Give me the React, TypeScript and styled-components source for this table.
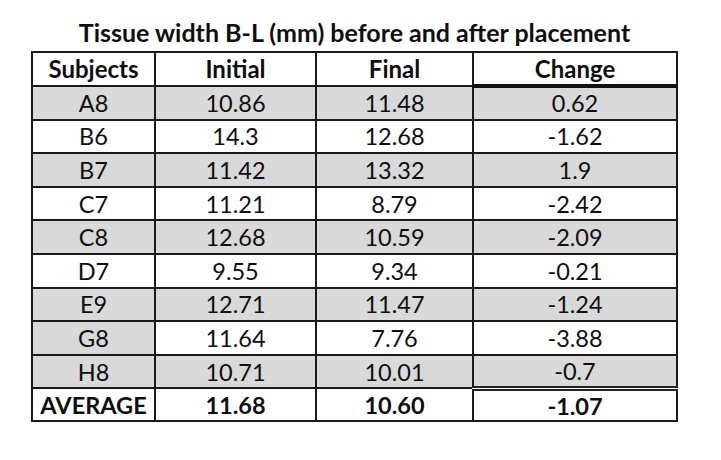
import React from "react";
import styled, { createGlobalStyle } from "styled-components";

const Global = createGlobalStyle`
  html, body { margin: 0; padding: 0; background: #ffffff; }
  body { font-family: Lato, "Open Sans", sans-serif; color: #0e0e0e; }
`;

const Page = styled.div`
  width: 721px;
  height: 460px;
  padding: 17px 0 0 32px;
  box-sizing: border-box;
`;

const Block = styled.div`
  width: 645px;
  display: flex;
  flex-direction: column;
  align-items: center;
`;

const Title = styled.div`
  font-weight: 700;
  font-size: 25px;
  line-height: 30px;
  height: 34px;
  white-space: nowrap;
`;

const Table = styled.table`
  width: 645px;
  border-collapse: collapse;
  table-layout: fixed;
  border: 2px solid #1a1a1a;
`;

const Row = styled.tr<{ $h: number }>`
  height: ${(p) => p.$h}px;
`;

const Cell = styled.td<{ $shade?: boolean; $bold?: boolean; $thickBottom?: boolean; $doubleTop?: boolean }>`
  border: 2px solid #1a1a1a;
  padding: 0;
  text-align: center;
  vertical-align: middle;
  font-size: 23.5px;
  line-height: 28px;
  font-weight: ${(p) => (p.$bold ? 700 : 400)};
  background: ${(p) => (p.$shade ? "#d9d9d9" : "#ffffff")};
  ${(p) => (p.$thickBottom ? "border-bottom: 4px solid #111;" : "")}
  ${(p) => (p.$doubleTop ? "border-top: 5px double #222;" : "")}
`;

const Head = styled(Cell).attrs({ as: "th" })`
  font-size: 24px;
`;

type R = { s: string; i: string; f: string; c: string; shade: [boolean, boolean, boolean, boolean] };

const all = (v: boolean): [boolean, boolean, boolean, boolean] => [v, v, v, v];

const rows: R[] = [
  { s: "A8", i: "10.86", f: "11.48", c: "0.62", shade: all(true) },
  { s: "B6", i: "14.3", f: "12.68", c: "-1.62", shade: all(false) },
  { s: "B7", i: "11.42", f: "13.32", c: "1.9", shade: all(true) },
  { s: "C7", i: "11.21", f: "8.79", c: "-2.42", shade: all(false) },
  { s: "C8", i: "12.68", f: "10.59", c: "-2.09", shade: all(true) },
  { s: "D7", i: "9.55", f: "9.34", c: "-0.21", shade: all(false) },
  { s: "E9", i: "12.71", f: "11.47", c: "-1.24", shade: all(true) },
  { s: "G8", i: "11.64", f: "7.76", c: "-3.88", shade: [true, false, false, false] },
  { s: "H8", i: "10.71", f: "10.01", c: "-0.7", shade: all(true) },
];

export default function App() {
  return (
    <Page>
      <Global />
      <Block>
        <Title>Tissue width B-L (mm) before and after placement</Title>
        <Table>
          <colgroup>
            <col style={{ width: 123 }} />
            <col style={{ width: 161 }} />
            <col style={{ width: 157 }} />
            <col style={{ width: 204 }} />
          </colgroup>
          <thead>
            <Row $h={34}>
              <Head $bold>Subjects</Head>
              <Head $bold>Initial</Head>
              <Head $bold>Final</Head>
              <Head $bold $thickBottom>Change</Head>
            </Row>
          </thead>
          <tbody>
            {rows.map((r) => (
              <Row $h={33.6} key={r.s}>
                <Cell $shade={r.shade[0]}>{r.s}</Cell>
                <Cell $shade={r.shade[1]}>{r.i}</Cell>
                <Cell $shade={r.shade[2]}>{r.f}</Cell>
                <Cell $shade={r.shade[3]}>{r.c}</Cell>
              </Row>
            ))}
            <Row $h={33}>
              <Cell $bold>AVERAGE</Cell>
              <Cell $bold>11.68</Cell>
              <Cell $bold>10.60</Cell>
              <Cell $bold $doubleTop>-1.07</Cell>
            </Row>
          </tbody>
        </Table>
      </Block>
    </Page>
  );
}
